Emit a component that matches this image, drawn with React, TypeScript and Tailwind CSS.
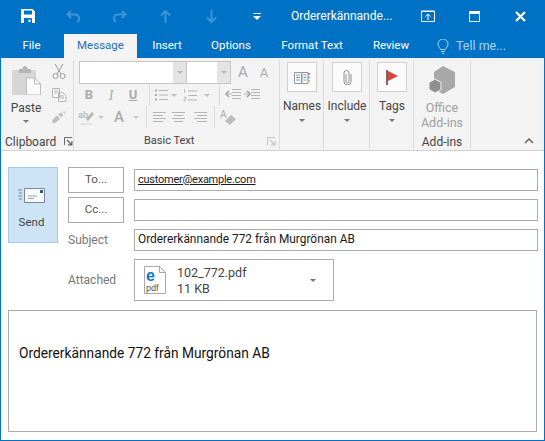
import React from "react";

function Caret({ className = "" }: { className?: string }) {
  return (
    <svg width="6" height="3" viewBox="0 0 6 3" className={className}>
      <path d="M0 0h6L3 3z" fill="currentColor" />
    </svg>
  );
}

function Launcher({ color = "#777" }: { color?: string }) {
  return (
    <svg width="9" height="9" viewBox="0 0 9 9" fill="none">
      <path d="M0.5 8V0.5H8" stroke={color} />
      <path d="M3 3l4.5 4.5M8 4v4H4" stroke={color} strokeWidth="1.2" />
    </svg>
  );
}

function TitleCell({ className = "w-[46px]", children }: { className?: string; children: React.ReactNode }) {
  return <div className={`flex h-full items-center justify-center ${className}`}>{children}</div>;
}

function Tab({ className, children }: { className: string; children: React.ReactNode }) {
  return <div className={`flex h-[24px] items-center justify-center ${className}`}>{children}</div>;
}

function Cell({ className = "w-[22px]", children }: { className?: string; children?: React.ReactNode }) {
  return <div className={`flex h-[22px] shrink-0 items-center justify-center ${className}`}>{children}</div>;
}

function Lines({ kind }: { kind: "left" | "center" | "right" }) {
  const rows = [
    [1, 14],
    [kind === "left" ? 1 : kind === "center" ? 3 : 4, kind === "left" ? 11 : kind === "center" ? 12 : 14],
    [1, 14],
    [kind === "left" ? 1 : kind === "center" ? 3 : 4, kind === "left" ? 11 : kind === "center" ? 12 : 14],
  ];
  return (
    <svg width="15" height="12" viewBox="0 0 15 12" stroke="#b5b5b5">
      {rows.map(([a, b], i) => (
        <path key={i} d={`M${a} ${1.5 + i * 3}H${b}`} />
      ))}
    </svg>
  );
}

function BigTool({ label, children }: { label: string; children: React.ReactNode }) {
  return (
    <div className="flex w-[44px] shrink-0 flex-col items-center">
      <div className="flex h-[30px] w-[30px] items-center justify-center border border-[#d0d0d0] bg-[#fbfbfb]">{children}</div>
      <div className="mt-[5px] text-[12px] leading-[18px] whitespace-nowrap text-[#444]">{label}</div>
      <Caret className="mt-[4px] text-[#777]" />
    </div>
  );
}

function Sep({ className = "" }: { className?: string }) {
  return <div className={`h-[22px] w-px shrink-0 bg-[#dcdcdc] ${className}`} />;
}

function FormButton({ children }: { children: React.ReactNode }) {
  return (
    <div className="flex h-[26px] w-[56px] items-center justify-center border border-[#ababab] bg-white text-[11.5px] text-[#555]">
      {children}
    </div>
  );
}

export default function App() {
  return (
    <div
      className="flex h-[441px] w-[545px] flex-col overflow-hidden border-x border-b border-[#0072c6] bg-white"
      style={{ fontFamily: 'Roboto, "Noto Sans", sans-serif' }}
    >
      {/* title bar */}
      <div className="flex h-[32px] shrink-0 items-center bg-[#0072c6] pl-[3px] text-white">
        <TitleCell className="w-[46px] pl-[2px]">
          <svg width="14" height="14" viewBox="0 0 14 14">
            <path fillRule="evenodd" d="M0 0h11.5L14 2.5V14H0zM3 1.5v4h8v-4zM3 9v5h8V9z" fill="#fff" />
            <path d="M7.5 10.5h2V13h-2z" fill="#fff" />
          </svg>
        </TitleCell>
        <TitleCell>
          <svg width="15" height="13" viewBox="0 0 15 13" fill="none" stroke="#3d94d9" strokeWidth="2">
            <path d="M5 1L1.5 4.5 5 8M2 4.5h7a4 4 0 0 1 2 7.5" />
          </svg>
        </TitleCell>
        <TitleCell>
          <svg width="15" height="13" viewBox="0 0 15 13" fill="none" stroke="#3d94d9" strokeWidth="2">
            <path d="M10 1l3.5 3.5L10 8M13 4.5H6a4 4 0 0 0-2 7.5" />
          </svg>
        </TitleCell>
        <TitleCell>
          <svg width="11" height="13" viewBox="0 0 11 13" fill="none" stroke="#3d94d9" strokeWidth="2">
            <path d="M1 5.5l4.5-4.5L10 5.5M5.5 2v11" />
          </svg>
        </TitleCell>
        <TitleCell>
          <svg width="11" height="13" viewBox="0 0 11 13" fill="none" stroke="#3d94d9" strokeWidth="2">
            <path d="M1 7.5L5.5 12 10 7.5M5.5 11V0" />
          </svg>
        </TitleCell>
        <TitleCell>
          <svg width="8" height="7" viewBox="0 0 8 7" fill="#fff">
            <path d="M0 0h8v1H0zM0 3h8L4 7z" />
          </svg>
        </TitleCell>
        <div className="ml-[11px] w-[114px] text-[12px] whitespace-nowrap">Ordererkännande...</div>
        <TitleCell>
          <svg width="14" height="12" viewBox="0 0 14 12" fill="none" stroke="#fff">
            <path d="M.5 1.5h13v10H.5zM.5 1h13" />
            <path d="M7 10V4M4.5 6.5L7 4l2.5 2.5" />
          </svg>
        </TitleCell>
        <TitleCell>
          <svg width="11" height="11" viewBox="0 0 11 11" fill="none" stroke="#fff">
            <path d="M.5 2.5h10v8H.5z" />
            <path d="M0 1h11" strokeWidth="2" />
          </svg>
        </TitleCell>
        <TitleCell>
          <svg width="11" height="11" viewBox="0 0 11 11" fill="none" stroke="#fff" strokeWidth="2.2">
            <path d="M1 1l9 9M10 1l-9 9" />
          </svg>
        </TitleCell>
      </div>

      {/* tabs */}
      <div className="flex h-[26px] shrink-0 items-end bg-[#0072c6] text-[11.5px] text-white">
        <Tab className="w-[61px]">File</Tab>
        <Tab className="ml-[2px] w-[73px] bg-[#f4f4f4] text-[#1e6fb8]">Message</Tab>
        <Tab className="w-[60px]">Insert</Tab>
        <Tab className="w-[68px]">Options</Tab>
        <Tab className="w-[94px]">Format Text</Tab>
        <Tab className="w-[64px]">Review</Tab>
        <div className="ml-[14px] flex h-[24px] items-center gap-[7px] text-[12.5px] text-[#a9d2f1]">
          <svg width="12" height="15" viewBox="0 0 12 15" fill="none" stroke="#a9d2f1">
            <path d="M3.5 10.5C3 8.5 1 7.5 1 5a5 5 0 0 1 10 0c0 2.5-2 3.5-2.5 5.5zM4 12.5h4M5 14.5h2" />
          </svg>
          <span>Tell me...</span>
        </div>
      </div>

      {/* ribbon */}
      <div className="flex h-[93px] shrink-0 border-b border-[#d2d2d2] bg-[#f3f3f3] pt-[2px]">
        {/* Clipboard */}
        <div className="flex h-[89px] w-[73px] shrink-0 flex-col border-r border-[#dcdcdc]">
          <div className="flex h-[73px] pt-[6px]">
            <div className="flex w-[50px] flex-col items-center">
              <svg width="29" height="29" viewBox="0 0 29 29">
                <path d="M0 4h24v25H0z" fill="#d6d6d6" />
                <path d="M7 3h3l2-3h2l2 3h3v4H7z" fill="#b5b5b5" />
                <path d="M14.5 12h8l6 6v11h-14z" fill="#fafafa" stroke="#bdbdbd" />
                <path d="M22.5 12v6h6" fill="none" stroke="#bdbdbd" />
              </svg>
              <div className="mt-[4px] text-[12px] leading-[18px] text-[#444]">Paste</div>
              <Caret className="mt-[3px] text-[#777]" />
            </div>
            <div className="-mt-[3px] -ml-[3px] flex w-[22px] flex-col items-center gap-[9px]">
              <svg width="14" height="16" viewBox="0 0 14 16" fill="none" stroke="#9a9a9a">
                <path d="M3 1l6 10M11 1L5 11" />
                <circle cx="3.5" cy="13" r="2.5" />
                <circle cx="10.5" cy="13" r="2.5" />
              </svg>
              <svg width="15" height="14" viewBox="0 0 15 14" fill="#f6f6f6" stroke="#b5b5b5">
                <path d="M.5.5h7v9h-7zM6.5 4.5h4l3.5 3v6H6.5z" />
                <path d="M2 3h4M2 5h3M8 8h4M8 10h4" fill="none" />
              </svg>
              <svg width="14" height="13" viewBox="0 0 14 12" fill="#bdbdbd">
                <path d="M0 9l5-5 3 3-4 4-3 1zM6 3l3-2 2 2-1 3z" />
                <path d="M10 0l4 0-1 3z" fill="#d0d0d0" />
              </svg>
            </div>
          </div>
          <div className="flex h-[16px] items-center pt-[1px] pl-[4px] text-[12px] whitespace-nowrap text-[#444]">
            <span className="w-[60px]">Clipboard</span>
            <Launcher color="#666" />
          </div>
        </div>

        {/* Basic Text */}
        <div className="flex h-[89px] w-[206px] shrink-0 flex-col border-r border-[#dcdcdc] pl-[5px]">
          <div className="flex h-[73px] flex-col">
            <div className="flex h-[24px] items-center pt-[1px]">
              <div className="flex h-[23px] w-[108px] justify-end border border-[#c6c6c6] bg-white">
                <div className="flex w-[13px] items-center justify-center bg-[#e4e4e4]">
                  <Caret className="text-[#b5b5b5]" />
                </div>
              </div>
              <div className="flex h-[23px] w-[44px] justify-end border-y border-r border-[#c6c6c6] bg-white">
                <div className="flex w-[13px] items-center justify-center bg-[#e4e4e4]">
                  <Caret className="text-[#b5b5b5]" />
                </div>
              </div>
              <Cell className="ml-[1px] w-[22px] text-[15px] text-[#aaa]">A</Cell>
              <Cell className="w-[20px] text-[13px] text-[#aaa]">A</Cell>
            </div>
            <div className="flex h-[22px] items-center">
              <Cell className="-ml-[1px] w-[22px] text-[13px] font-bold text-[#aaa]">B</Cell>
              <Cell className="w-[22px] font-['Liberation_Serif',serif] text-[14px] text-[#aaa] italic">I</Cell>
              <Cell className="w-[22px] text-[13px] font-bold text-[#aaa] underline">U</Cell>
              <Sep className="ml-[5px]" />
              <Cell className="ml-[4px]">
                <svg width="15" height="12" viewBox="0 0 15 12" stroke="#b5b5b5">
                  <path d="M5 1.5h9M5 6h9M5 10.5h9" />
                  <path d="M1 1.5h2M1 6h2M1 10.5h2" strokeWidth="2" stroke="#aaa" />
                </svg>
              </Cell>
              <Cell className="w-[10px]">
                <Caret className="text-[#c0c0c0]" />
              </Cell>
              <Cell>
                <svg width="15" height="13" viewBox="0 0 15 13" stroke="#b5b5b5">
                  <path d="M5 2h9M5 6.5h9M5 11h9" />
                  <path d="M1.5 0v4M1 8h2v2H1v2h2M1 0h1" fill="none" strokeWidth=".8" />
                </svg>
              </Cell>
              <Cell className="w-[12px]">
                <Caret className="text-[#c0c0c0]" />
              </Cell>
              <Sep className="ml-[6px]" />
              <Cell className="ml-[5px]">
                <svg width="16" height="12" viewBox="0 0 16 12" stroke="#b5b5b5" fill="none">
                  <path d="M7 .5h9M7 3.5h9M7 6.5h9M7 9.5h9M1 5h6" />
                  <path d="M4 2L1 5l3 3" strokeWidth="1.5" stroke="#9c9c9c" />
                </svg>
              </Cell>
              <Cell>
                <svg width="16" height="12" viewBox="0 0 16 12" stroke="#b5b5b5" fill="none">
                  <path d="M7 .5h9M7 3.5h9M7 6.5h9M7 9.5h9M0 5h6" />
                  <path d="M3 2l3 3-3 3" strokeWidth="1.5" stroke="#9c9c9c" />
                </svg>
              </Cell>
            </div>
            <div className="flex h-[22px] items-center">
              <Cell className="-ml-[1px]">
                <svg width="17" height="15" viewBox="0 0 17 15">
                  <text x="0" y="8" fontSize="9" fill="#aaa">ab</text>
                  <path d="M8 9l6-7 2 2-6 7z" fill="#b5b5b5" />
                  <path d="M2 13h12v2H2z" fill="#e2e2e2" />
                </svg>
              </Cell>
              <Cell className="w-[12px]">
                <Caret className="text-[#c8c8c8]" />
              </Cell>
              <Cell className="ml-[1px] w-[22px] text-[15px] font-medium text-[#aaa]">A</Cell>
              <Cell className="w-[12px]">
                <Caret className="text-[#c8c8c8]" />
              </Cell>
              <Sep className="ml-[4px]" />
              <Cell className="ml-[5px]">
                <Lines kind="left" />
              </Cell>
              <Cell>
                <Lines kind="center" />
              </Cell>
              <Cell>
                <Lines kind="right" />
              </Cell>
              <Sep className="ml-[3px]" />
              <Cell className="ml-[5px]">
                <svg width="16" height="16" viewBox="0 0 16 16">
                  <text x="0" y="9" fontSize="10" fill="#aaa">A</text>
                  <path d="M5 12l6-6 5 4-6 6z" fill="#bdbdbd" />
                </svg>
              </Cell>
            </div>
          </div>
          <div className="flex h-[16px] items-center pt-[1px] text-[11px] text-[#444]">
            <span className="ml-[65px]">Basic Text</span>
            <span className="mr-[3px] ml-auto">
              <Launcher color="#c4c4c4" />
            </span>
          </div>
        </div>

        {/* Names / Include / Tags */}
        <div className="h-[89px] w-[44px] shrink-0 border-r border-[#dcdcdc] pt-[2px]">
          <BigTool label="Names">
            <svg width="16" height="13" viewBox="0 0 16 13" fill="none" stroke="#8a9aa8">
              <path d="M.5 1.5h7v11h-7zM8 1.5h6v11H8z" />
              <path d="M2 4h4M2 6.5h4M2 9h4M9.5 4h3M9.5 6.5h3M9.5 9h3" />
              <path d="M15 2v2" stroke="#d26a5a" strokeWidth="1.5" />
              <path d="M15 5.5v2" stroke="#5a9bd2" strokeWidth="1.5" />
              <path d="M15 9v2" stroke="#d2a85a" strokeWidth="1.5" />
            </svg>
          </BigTool>
        </div>
        <div className="h-[89px] w-[46px] shrink-0 border-r border-[#dcdcdc] pt-[2px] pl-[1px]">
          <BigTool label="Include">
            <svg width="9" height="15" viewBox="0 0 9 15" fill="none" stroke="#8c8c8c">
              <path d="M3 4v7.5a1.5 1.5 0 0 0 3 0V3a2.5 2.5 0 0 0-5 0v8.5a3.5 3.5 0 0 0 7 0V4" />
            </svg>
          </BigTool>
        </div>
        <div className="h-[89px] w-[44px] shrink-0 border-r border-[#dcdcdc] pt-[2px]">
          <BigTool label="Tags">
            <svg width="13" height="15" viewBox="0 0 13 15">
              <path d="M0 0h2v15H0z" fill="#7b6a60" />
              <path d="M2 1l10 5-10 5z" fill="#d9453b" />
            </svg>
          </BigTool>
        </div>

        {/* Add-ins */}
        <div className="flex h-[89px] w-[57px] shrink-0 flex-col border-r border-[#dcdcdc]">
          <div className="flex h-[73px] flex-col items-center pt-[6px]">
            <svg width="28" height="28" viewBox="0 0 28 28">
              <path d="M15 0l12 6v15l-12 7-9-5V6z" fill="#a8a8a8" />
              <path d="M7 13l6 3.5v7L7 27l-6-3.5v-7z" fill="#8f8f8f" stroke="#f3f3f3" />
            </svg>
            <div className="mt-[6px] text-center text-[12.5px] leading-[15px] text-[#a0a0a0]">
              Office
              <br />
              <span className="whitespace-nowrap">Add-ins</span>
            </div>
          </div>
          <div className="flex h-[16px] items-center justify-center pt-[1px] text-[12px] text-[#444]">Add-ins</div>
        </div>

        <div className="flex h-[89px] flex-1 items-end justify-end pr-[10px] pb-[5px]">
          <svg width="10" height="6" viewBox="0 0 10 6" fill="none" stroke="#666" strokeWidth="1.5">
            <path d="M1 5l4-4 4 4" />
          </svg>
        </div>
      </div>

      {/* message header */}
      <div className="flex pt-[16px] pl-[7px]">
        <div className="flex h-[76px] w-[50px] shrink-0 flex-col items-center border border-[#a4c9e8] bg-[#cde4f7] pt-[20px] pr-[3px] text-[11.5px] text-[#444]">
          <svg width="27" height="15" viewBox="0 0 27 15" fill="none">
            <path d="M6.5.5h20v14h-20z" fill="#f6fafd" stroke="#7b8794" />
            <path d="M22 2h3v3h-3z" fill="#3b5a7a" />
            <path d="M10 8h9M10 10.5h6" stroke="#9aa5b0" />
            <path d="M0 2h4M1 5h3M0 8h4M1 11h3" stroke="#7b8794" />
          </svg>
          <span className="mt-[11px]">Send</span>
        </div>
        <div className="ml-[10px] flex w-[470px] flex-col">
          <div className="flex items-center">
            <FormButton>To...</FormButton>
            <div className="ml-[10px] flex h-[22px] flex-1 items-center border border-[#ababab] pl-[3px] text-[11px] tracking-[-0.25px] text-[#1a1a1a] underline">
              customer@example.com
            </div>
          </div>
          <div className="mt-[4px] flex items-center">
            <FormButton>Cc...</FormButton>
            <div className="ml-[10px] h-[22px] flex-1 border border-[#ababab]" />
          </div>
          <div className="mt-[6px] flex items-center">
            <div className="w-[56px] text-[12px] text-[#777]">Subject</div>
            <div className="ml-[10px] flex h-[22px] flex-1 items-center border border-[#ababab] pl-[3px] text-[11.9px] whitespace-nowrap text-[#1a1a1a]">
              Ordererkännande 772 från Murgrönan AB
            </div>
          </div>
          <div className="mt-[8px] flex items-center">
            <div className="w-[56px] text-[12px] text-[#777]">Attached</div>
            <div className="ml-[10px] flex h-[42px] w-[200px] items-center border border-[#ababab] pl-[9px] text-[12.5px] leading-[16px] text-[#444]">
              <svg width="22" height="28" viewBox="0 0 22 28">
                <path d="M.5.5h15l6 6v21H.5z" fill="#fff" stroke="#a8a8a8" />
                <path d="M15.5.5v6h6" fill="none" stroke="#a8a8a8" />
                <text x="2" y="15" fontSize="16" fontWeight="700" fill="#0b78d0" fontFamily="'Liberation Sans', sans-serif">e</text>
                <text x="2" y="25" fontSize="9" fill="#555" fontFamily="'Liberation Sans', sans-serif">pdf</text>
              </svg>
              <div className="ml-[11px] w-[133px] pt-[2px]">
                <div>102_772.pdf</div>
                <div>11 KB</div>
              </div>
              <Caret className="text-[#777]" />
            </div>
          </div>
        </div>
      </div>

      {/* body */}
      <div className="mt-[9px] mr-[7px] ml-[7px] flex h-[122px] shrink-0 items-start border border-[#ababab] pt-[32px] pl-[10px] text-[13.75px] text-[#111]">
        Ordererkännande 772 från Murgrönan AB
      </div>
    </div>
  );
}
